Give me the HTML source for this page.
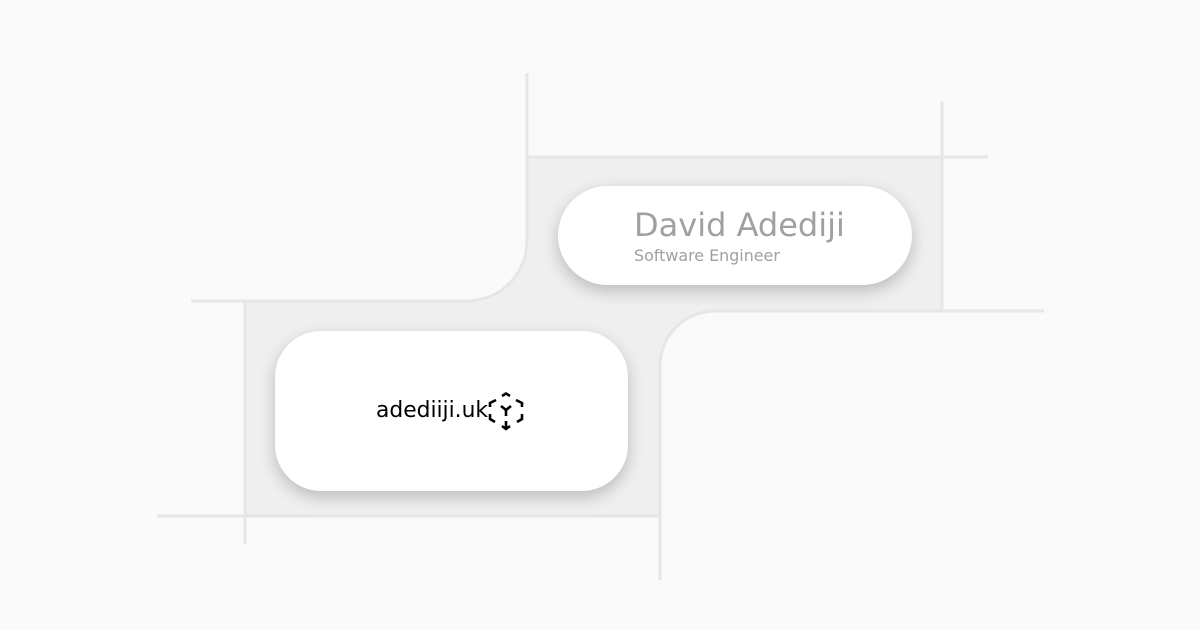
<!DOCTYPE html>
<html><head><style>
html,body{margin:0;padding:0;width:1200px;height:630px;background:#fafafa;overflow:hidden;font-family:"DejaVu Sans","Liberation Sans",sans-serif;}
.card{position:absolute;background:#fff;box-shadow:0 6px 16px rgba(0,0,0,0.22);}
</style></head><body>
<svg width="1200" height="630" style="position:absolute;left:0;top:0">
<path d="M527 157 L942 157 L942 311 L715 311 A55 55 0 0 0 660 366 L660 516 L245 516 L245 301 L467 301 A60 60 0 0 0 527 241 Z" fill="#efefef"/>
<g stroke="#e6e6e6" stroke-width="3" fill="none">
<path d="M527 73 L527 241 A60 60 0 0 1 467 301 L191 301"/>
<path d="M527 157 L988 157"/>
<path d="M942 101 L942 311"/>
<path d="M1044 311 L715 311 A55 55 0 0 0 660 366 L660 580"/>
<path d="M660 516 L157 516"/>
<path d="M245 301 L245 544"/>
</g>
</svg>
<div class="card" style="left:558px;top:186px;width:354px;height:99px;border-radius:50px;"></div>
<div class="card" style="left:275px;top:331px;width:353px;height:160px;border-radius:46px;"></div>
<div style="position:absolute;left:634px;top:205px;font-size:32px;color:#a0a0a0;line-height:40px;white-space:nowrap">David Adediji</div>
<div style="position:absolute;left:634px;top:246px;font-size:15.9px;color:#a0a0a0;line-height:20px;white-space:nowrap">Software Engineer</div>
<div style="position:absolute;left:376px;top:397px;font-size:21.8px;color:#000;line-height:28px;white-space:nowrap">adediiji.uk</div>
<svg width="40" height="40" style="position:absolute;left:487px;top:391px" viewBox="0 0 40 40">
<g stroke="#000" stroke-width="2.6" fill="none" stroke-linecap="butt">
<path d="M15 5 L19 2.5 L23 5"/>
<path d="M9 9 L3 12 L3 16"/>
<path d="M29 9 L35 12 L35 16"/>
<path d="M3 23 L3 28 L8 31"/>
<path d="M35 23 L35 28 L30 31"/>
<path d="M19 30 L19 37"/>
<path d="M15 35 L19 38 L23 35"/>
<path d="M14 15 L19 19 L24 15 M19 19 L19 25"/>
</g>
</svg>
</body></html>
